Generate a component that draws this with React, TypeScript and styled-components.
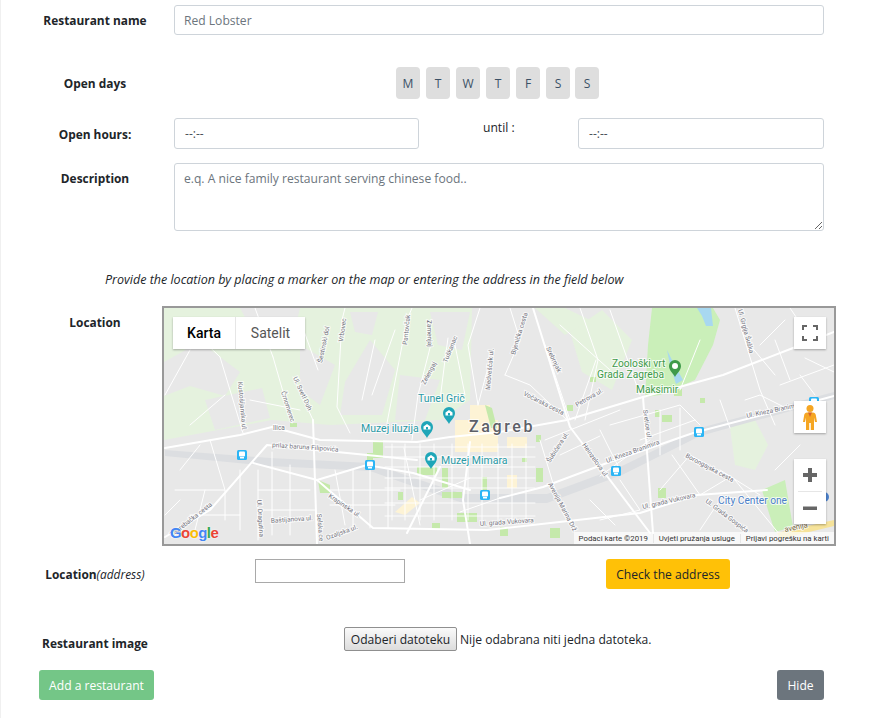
import React from 'react';
import styled, { createGlobalStyle } from 'styled-components';

const GlobalStyle = createGlobalStyle`
  html, body {
    margin: 0;
    padding: 0;
    background: #fff;
  }
  body {
    font-family: "Open Sans", "Noto Sans", "Liberation Sans", sans-serif;
    font-size: 12.1px;
    color: #212529;
  }
`;

const Form = styled.form`
  width: 882px;
  height: 718px;
  box-sizing: border-box;
  overflow: hidden;
  padding: 5px 58px 0 24px;
  border-left: 1px solid #f0f0f0;
  display: flex;
  flex-direction: column;
`;

const Row = styled.div<{ $top?: number; $align?: string }>`
  display: flex;
  align-items: ${p => p.$align || 'center'};
  margin-top: ${p => p.$top || 0}px;
`;

const Label = styled.label<{ $offset?: number }>`
  width: 140px;
  margin: ${p => p.$offset || 0}px 9px 0 0;
  flex: none;
  text-align: center;
  font-weight: 700;
  font-size: 11.9px;
  line-height: 20px;
  color: #212529;
`;

const AddressNote = styled.em`
  font-weight: 400;
`;

const TextInput = styled.input`
  flex: 1;
  min-width: 0;
  box-sizing: border-box;
  height: 30px;
  padding: 0 9px;
  border: 1px solid #ced4da;
  border-radius: 3px;
  background: #fff;
  font: 12.1px "Open Sans", sans-serif;
  color: #495057;
  &::placeholder { color: #6c757d; opacity: 1; }
`;

const DayList = styled.div`
  display: flex;
  margin-left: 222px;
`;

const Day = styled.span<{ $gap: number }>`
  width: 24px;
  height: 32px;
  margin-right: ${p => p.$gap}px;
  border-radius: 4px;
  background: #dedede;
  display: flex;
  align-items: center;
  justify-content: center;
  font-size: 12.1px;
  color: #3b5166;
`;

const TimeInput = styled.div<{ $w: number }>`
  box-sizing: border-box;
  width: ${p => p.$w}px;
  height: 31px;
  padding: 0 10px;
  border: 1px solid #ced4da;
  border-radius: 3px;
  display: flex;
  align-items: center;
  color: #495057;
  font-size: 12.1px;
`;

const Until = styled.span`
  width: 159px;
  padding-left: 64px;
  box-sizing: border-box;
  align-self: flex-start;
  line-height: 20px;
`;

const Description = styled.textarea`
  flex: 1;
  box-sizing: border-box;
  height: 68px;
  padding: 5px 9px;
  border: 1px solid #ced4da;
  border-radius: 3px;
  font: 12.1px/20px "Open Sans", sans-serif;
  color: #495057;
  &::placeholder { color: #6c757d; opacity: 1; }
`;

const Hint = styled.p`
  margin: 39px 0 0 80px;
  font-style: italic;
  font-size: 12.5px;
  line-height: 20px;
`;

const MapFrame = styled.div`
  position: relative;
  flex: none;
  box-sizing: border-box;
  width: 674px;
  height: 240px;
  margin-left: -12px;
  border: 2px solid #999;
  overflow: hidden;
  background: #e8e8e8;
  font-family: Roboto, "Liberation Sans", sans-serif;
  svg { display: block; }
`;

const MapTypes = styled.div`
  position: absolute;
  left: 9px;
  top: 9px;
  display: flex;
  height: 32px;
  background: #fff;
  box-shadow: 0 1px 2px rgba(0, 0, 0, 0.3);
  font-size: 14px;
`;

const MapType = styled.span<{ $active?: boolean; $w: number }>`
  width: ${p => p.$w}px;
  display: flex;
  align-items: center;
  justify-content: center;
  color: ${p => (p.$active ? '#000' : '#565656')};
  font-weight: ${p => (p.$active ? 500 : 400)};
  & + & { border-left: 1px solid #e6e6e6; }
`;

const MapControl = styled.div<{ $top: number; $h?: number }>`
  position: absolute;
  right: 8px;
  top: ${p => p.$top}px;
  width: 32px;
  height: ${p => p.$h || 32}px;
  background: #fff;
  box-shadow: 0 1px 2px rgba(0, 0, 0, 0.3);
  display: flex;
  flex-direction: column;
  align-items: center;
  justify-content: center;
`;

const ZoomButton = styled.div`
  flex: 1;
  display: flex;
  align-items: center;
  justify-content: center;
`;

const ZoomDivider = styled.div`
  width: 24px;
  height: 1px;
  flex: none;
  background: #e6e6e6;
`;

const Attribution = styled.div`
  position: absolute;
  right: 0;
  bottom: 0;
  height: 12px;
  display: flex;
  align-items: center;
  background: rgba(255, 255, 255, 0.7);
  font-size: 7.8px;
  color: #333;
  span { padding: 0 5px; white-space: nowrap; }
  span + span { border-left: 1px solid #e6e6e6; }
`;

const GoogleLogo = styled.div`
  position: absolute;
  left: 6px;
  bottom: 3px;
  font: 700 15px/17px "Liberation Sans", sans-serif;
  letter-spacing: -0.6px;
  text-shadow: 0 0 2px #fff;
`;

const LogoLetter = styled.span<{ $c: string }>`
  color: ${p => p.$c};
`;

const AddressInput = styled.input`
  box-sizing: border-box;
  width: 150px;
  height: 24px;
  margin-left: 81px;
  border: 1px solid #a9a9a9;
  background: #fff;
`;

const Button = styled.button<{ $bg: string; $fg: string; $w: number }>`
  box-sizing: border-box;
  width: ${p => p.$w}px;
  height: 30px;
  padding: 0;
  border: none;
  border-radius: 3px;
  background: ${p => p.$bg};
  color: ${p => p.$fg};
  font: 12.1px "Open Sans", sans-serif;
`;

const CheckButton = styled(Button)`
  margin-left: 201px;
`;

const FilePick = styled.div`
  display: flex;
  align-items: center;
  margin-left: 170px;
  font-size: 12.1px;
`;

const FileButton = styled.span`
  box-sizing: border-box;
  width: 113px;
  height: 24px;
  margin-right: 3px;
  display: flex;
  align-items: center;
  justify-content: center;
  border: 1px solid #8f8f8f;
  border-radius: 2px;
  background: linear-gradient(#fafafa, #dcdcdc);
`;

const Actions = styled.div`
  display: flex;
  justify-content: space-between;
  margin: 17px 0 0 14px;
`;

const MapLabel = styled.text<{ $c?: string; $s?: number; $w?: number; $ls?: number }>`
  font-family: Roboto, "Liberation Sans", sans-serif;
  font-size: ${p => p.$s || 6.5}px;
  font-weight: ${p => p.$w || 400};
  letter-spacing: ${p => p.$ls || 0}px;
  fill: ${p => p.$c || '#74747e'};
  paint-order: stroke;
  stroke: rgba(255, 255, 255, 0.75);
  stroke-width: 2px;
`;

const hillGreen = [
  'M164 308H472L470 400L440 420L330 425L272 420L164 440Z',
  'M570 332L602 310L632 340L612 390L582 372Z',
  'M535 308H565L590 320L565 335Z',
  'M730 427L755 420L768 445L755 470L735 465Z',
];
const hillGrey = [
  'M164 362L200 342L240 372L225 396L190 386L164 396Z',
  'M240 308H300L290 350L260 345Z',
  'M345 382L370 340L395 370L382 415L340 415Z',
  'M400 375L440 380L425 420L395 420Z',
  'M300 345L335 365L320 405L300 390Z',
  'M172 330L205 320L215 345L185 350Z',
  'M430 312L470 312L462 350L438 345Z',
  'M205 400L262 388L270 418L215 430Z',
  'M350 312L378 312L372 335L355 332Z',
];
const parks = [
  'M373 440H383V458H373Z', 'M367 453H373V460H367Z', 'M318 480L330 485V493H320Z', 'M290 423H297V427H290Z',
  'M417 467H437V475H417Z', 'M442 468H448V488H442Z', 'M442 492H462V498H442Z', 'M398 492H403V500H398Z',
  'M482 477H487V490H482Z', 'M485 405L492 408L497 428H491Z', 'M522 458H527V462H522Z', 'M536 468H543V482H536Z',
  'M550 528H560V538H550Z', 'M457 513H477V522H457Z', 'M590 377H596V382H590Z', 'M655 410H660V417H655Z',
  'M662 415H672V422H662Z', 'M658 488H666V498H658Z', 'M567 405H573V411H567Z', 'M536 435H541V442H536Z',
  'M432 523H440V530H432Z', 'M500 527H508V536H500Z', 'M700 398H705V403H700Z', 'M674 389H682V396H674Z',
];
const arterials = [
  'M165 448L240 435L272 427L320 440L417 442L450 437L500 432L567 420L643 397L723 375L793 348L834 332',
  'M165 537L210 510L267 445L347 453L417 460',
  'M253 463L317 480L367 465L413 473L470 490',
  'M317 480L373 528L487 530L640 513L697 495L767 490',
  'M500 498L543 487L607 463L693 433L793 407L834 396',
  'M533 308L570 427L650 533',
  'M643 397L653 533',
  'M440 467L407 533',
  'M313 420L317 544',
  'M470 442L463 500L470 544',
];
const streets = [
  'M220 357L243 433', 'M182 320L220 357', 'M273 357L292 423', 'M255 308L273 357', 'M293 377L313 420',
  'M342 320L337 407L350 433', 'M345 308L342 320', 'M407 320L387 423', 'M412 308L407 320',
  'M432 340L418 395L412 440', 'M448 338L445 360L440 400', 'M480 308L468 345L478 405',
  'M505 375L520 340L510 308', 'M505 375L530 385L567 420', 'M490 360L478 405',
  'M545 345L570 420', 'M580 308L598 360L585 420', 'M735 308L760 390L775 425',
  'M775 340L790 380', 'M790 308L815 345', 'M805 358L834 372', 'M780 385L834 365',
  'M240 470V530', 'M190 515H240', 'M175 490H225V520', 'M258 470V540', 'M272 452V535',
  'M258 490H310', 'M258 510H315', 'M290 465V535', 'M335 470L345 525', 'M330 490H400',
  'M330 505H395', 'M353 470V528', 'M370 470V528', 'M388 470V528', 'M404 448L420 525',
  'M420 500L470 478', 'M460 512L500 498', 'M540 440L558 500', 'M590 500L615 525',
  'M600 476L650 440', 'M620 470L600 430', 'M610 425L680 405L700 425', 'M640 440L695 420',
  'M660 410V455', 'M680 408V450', 'M660 490L690 455L735 480', 'M672 455L700 495', 'M720 470L760 495',
  'M735 480L780 535', 'M775 470L800 445', 'M725 480L700 495', 'M560 455L600 436', 'M545 440L620 410',
  'M596 360L575 420', 'M180 470L200 445', 'M210 440L225 490', 'M250 400L300 410', 'M190 350L165 395',
  'M610 310L640 395', 'M700 340L680 390', 'M720 400L730 428', 'M745 400L760 395L790 410',
  'M375 340L362 400', 'M300 320L318 370', 'M395 330L372 395', 'M225 395L190 425', 'M455 345L465 395',
  'M785 320L760 345', 'M800 375L815 395', 'M750 345L775 375', 'M560 325L610 370',
  'M600 520L640 510L620 480', 'M720 500L700 530', 'M180 500L165 515', 'M205 490L195 530',
];
const cityX = [392, 405, 420, 434, 452, 468, 482, 498, 512, 526];
const cityY = [447, 457, 467, 478, 488, 503, 516];

const smallLabels: [string, number, number, number][] = [
  ['Kustošijanska ul.', 238, 382, 85],
  ['Črnomerec', 281, 392, 72],
  ['Ul. Svetl Duh', 293, 378, 65],
  ['Šestinski dol', 322, 363, -78],
  ['Vrbovec', 343, 342, -82],
  ['Pantovčak', 407, 345, -84],
  ['Zamenjaj', 427, 320, 88],
  ['Tuškanac', 447, 363, -68],
  ['Zelengaj', 425, 385, -62],
  ['Medveščak ul.', 490, 390, -85],
  ['Ilica', 273, 430, 0],
  ['prilaz baruna Filipovića', 272, 447, 4],
  ['Krapinska ul.', 328, 497, 34],
  ['Baštijanova ul.', 271, 523, -4],
  ['Selska ce', 317, 514, 85],
  ['Ozaljska ul.', 327, 540, -20],
  ['Zagrebačka cesta', 172, 537, -38],
  ['Ul. Dragutina', 257, 500, 86],
  ['Bijenička cesta', 515, 355, -73],
  ['Srebrnjak', 546, 348, 65],
  ['Vočarska cesta', 523, 395, 27],
  ['Petrova ul.', 577, 407, -30],
  ['Šubićeva ul.', 550, 463, -57],
  ['Heinzelova ul.', 582, 445, 55],
  ['Avenija Marina Drž', 548, 484, 62],
  ['Ul. Kneza Branimira', 607, 463, -20],
  ['Ul. Kneza Branimira', 747, 418, -12],
  ['Svetice ul.', 643, 410, 82],
  ['Borongajska cesta', 685, 457, 28],
  ['Ul. grada Vukovara', 643, 509, -13],
  ['Ul. Grada Gospića', 705, 502, 37],
  ['Ul. grada Vukovara', 480, 526, -4],
  ['Ul. Grgija Šuška', 738, 310, 75],
];

const pinBody = 'M0 10C-2 6-6 3.500-6-1A6 6 0 0 1 6-1C6 3.500 2 6 0 10Z';

const TealPin: React.FC<{ x: number; y: number }> = ({ x, y }) => (
  <g transform={`translate(${x} ${y})`}>
    <path d={pinBody} fill="#1fa6b8" />
    <path d="M-3.500-1.500L0-4L3.500-1.500V1.500H-3.500Z" fill="#fff" />
    <path d="M-1-1H1V1.500H-1Z" fill="#1fa6b8" />
  </g>
);

const TransitStop: React.FC<{ x: number; y: number }> = ({ x, y }) => (
  <g transform={`translate(${x} ${y})`}>
    <rect x="-5" y="-5" width="10" height="10" rx="1.500" fill="#2bb5f5" />
    <rect x="-3" y="-3.500" width="6" height="5" rx="1" fill="#fff" />
    <rect x="-2" y="2" width="4" height="1.500" fill="#fff" />
  </g>
);

const MapDrawing: React.FC = () => (
  <svg width="670" height="236" viewBox="164 308 670 236">
    <rect x="164" y="308" width="670" height="236" fill="#e8e8e8" />
    {hillGreen.map(d => <path key={d} d={d} fill="#e5f2de" />)}
    {hillGrey.map(d => <path key={d} d={d} fill="#e8e8e8" />)}
    <path d="M165 450L270 458L370 463L420 480L463 494H547L620 467L700 428L834 392V399L700 436L622 475L547 503H463L418 488L370 471L270 466L165 456Z" fill="#dcdee1" />
    <path d="M652 308H713L720 320L713 345L695 380L660 395L645 397L648 345Z" fill="#caefb9" />
    <path d="M697 308H711L713 326L706 326L702 316Z" fill="#a8d8f0" />
    <path d="M667 350L672 360L683 380L676 384L670 365Z" fill="#a8d8f0" />
    <path d="M762 490L785 480L793 527L775 532L768 510Z" fill="#caefb9" />
    <path d="M470 405H490V420H498V452H455V420H470Z" fill="#fdf3d5" />
    <path d="M507 437H527V448H507Z" fill="#fdf3d5" />
    <path d="M507 475H517V488H507Z" fill="#fdf3d5" />
    <path d="M395 512L412 497L420 503L405 515Z" fill="#fdf3d5" />
    {parks.map(d => <path key={d} d={d} fill="#c5e9ab" />)}
    <g fill="none" stroke="#fff" strokeLinejoin="round" strokeLinecap="round">
      {cityX.map(x => <path key={x} d={`M${x} 444V520`} strokeWidth="0.9" />)}
      {cityY.map(y => <path key={y} d={`M385 ${y}H535`} strokeWidth="0.9" />)}
      {streets.map(d => <path key={d} d={d} strokeWidth="1" />)}
      {arterials.map(d => <path key={d} d={d} strokeWidth="2" />)}
    </g>
    <path d="M777 533L834 520V526L780 539Z" fill="#f6e39a" />
    {smallLabels.map(([t, x, y, r]) => (
      <MapLabel key={t + x} x={x} y={y} transform={`rotate(${r} ${x} ${y})`}>{t}</MapLabel>
    ))}
    <MapLabel x="418" y="402" $c="#2a9aa6" $s={10.5}>Tunel Grič</MapLabel>
    <MapLabel x="361" y="432" $c="#2a9aa6" $s={10.5}>Muzej iluzija</MapLabel>
    <MapLabel x="441" y="464" $c="#2a9aa6" $s={10.5}>Muzej Mimara</MapLabel>
    <MapLabel x="469" y="432" $c="#5c6068" $s={16} $w={500} $ls={2.6}>Zagreb</MapLabel>
    <MapLabel x="612" y="367" $c="#3f9a4a" $s={10.2}>Zoološki vrt</MapLabel>
    <MapLabel x="597" y="378" $c="#3f9a4a" $s={10.2}>Grada Zagreba</MapLabel>
    <MapLabel x="636" y="393" $c="#3f9a4a" $s={10.2}>Maksimir</MapLabel>
    <MapLabel x="718" y="504" $c="#4a7fc8" $s={10.2}>City Center one</MapLabel>
    <MapLabel x="785" y="532" $c="#7a6a40" $s={7.5} transform="rotate(-12 785 532)">avenija</MapLabel>
    <circle cx="824" cy="497" r="5" fill="#4a7fc8" />
    <TealPin x={449} y={414} />
    <TealPin x={427} y={428} />
    <TealPin x={431} y={459} />
    <g transform="translate(675 367)">
      <path d={pinBody} fill="#3f9a4a" />
      <circle cy="-1" r="3" fill="#fff" />
    </g>
    <TransitStop x={242} y={455} />
    <TransitStop x={370} y={465} />
    <TransitStop x={485} y={495} />
    <TransitStop x={699} y={432} />
    <TransitStop x={616} y={471} />
    <TransitStop x={814} y={402} />
  </svg>
);

const App: React.FC = () => (
  <>
    <GlobalStyle />
    <Form>
      <Row>
        <Label>Restaurant name</Label>
        <TextInput placeholder="Red Lobster" />
      </Row>

      <Row $top={32}>
        <Label>Open days</Label>
        <DayList>
          {['M', 'T', 'W', 'T', 'F', 'S', 'S'].map((d, i) => (
            <Day key={i} $gap={i === 5 ? 5 : 6}>{d}</Day>
          ))}
        </DayList>
      </Row>

      <Row $top={19}>
        <Label>Open hours:</Label>
        <TimeInput $w={245}>--:--</TimeInput>
        <Until>until :</Until>
        <TimeInput $w={246}>--:--</TimeInput>
      </Row>

      <Row $top={14} $align="flex-start">
        <Label $offset={5}>Description</Label>
        <Description placeholder="e.q. A nice family restaurant serving chinese food.." />
      </Row>

      <Hint>Provide the location by placing a marker on the map or entering the address in the field below</Hint>

      <Row $top={16} $align="flex-start">
        <Label $offset={6}>Location</Label>
        <MapFrame>
          <MapDrawing />
          <MapTypes>
            <MapType $active $w={62}>Karta</MapType>
            <MapType $w={69}>Satelit</MapType>
          </MapTypes>
          <MapControl $top={9}>
            <svg width="18" height="18" viewBox="0 0 18 18" fill="none" stroke="#666" strokeWidth="2">
              <path d="M2 6V2h4M12 2h4v4M16 12v4h-4M6 16H2v-4" />
            </svg>
          </MapControl>
          <MapControl $top={93}>
            <svg width="14" height="25" viewBox="0 0 14 25">
              <circle cx="7" cy="3.500" r="3.500" fill="#f5a623" />
              <path d="M4 7.500H10C11.500 7.500 12.500 8.500 12.800 10L14 17H12L11 12.500V25H7.800V18H6.200V25H3V12.500L2 17H0L1.200 10C1.500 8.500 2.500 7.500 4 7.500Z" fill="#f5a623" />
              <path d="M5 7.500L7 12L9 7.500Z" fill="#d9622b" />
            </svg>
          </MapControl>
          <MapControl $top={151} $h={65}>
            <ZoomButton>
              <svg width="16" height="16" viewBox="0 0 16 16" fill="#666">
                <path d="M6 1H10V6H15V10H10V15H6V10H1V6H6Z" />
              </svg>
            </ZoomButton>
            <ZoomDivider />
            <ZoomButton>
              <svg width="16" height="16" viewBox="0 0 16 16" fill="#666">
                <path d="M1 6.500H15V10H1Z" />
              </svg>
            </ZoomButton>
          </MapControl>
          <GoogleLogo>
            <LogoLetter $c="#4285f4">G</LogoLetter>
            <LogoLetter $c="#ea4335">o</LogoLetter>
            <LogoLetter $c="#fbbc05">o</LogoLetter>
            <LogoLetter $c="#4285f4">g</LogoLetter>
            <LogoLetter $c="#34a853">l</LogoLetter>
            <LogoLetter $c="#ea4335">e</LogoLetter>
          </GoogleLogo>
          <Attribution>
            <span>Podaci karte ©2019</span>
            <span>Uvjeti pružanja usluge</span>
            <span>Prijavi pogrešku na karti</span>
          </Attribution>
        </MapFrame>
      </Row>

      <Row $top={13} $align="flex-start">
        <Label as="div" $offset={5}>
          Location<AddressNote>(address)</AddressNote>
        </Label>
        <AddressInput />
        <CheckButton type="button" $bg="#ffc107" $fg="#212529" $w={124}>Check the address</CheckButton>
      </Row>

      <Row $top={38} $align="flex-start">
        <Label $offset={6}>Restaurant image</Label>
        <FilePick>
          <FileButton>Odaberi datoteku</FileButton>
          Nije odabrana niti jedna datoteka.
        </FilePick>
      </Row>

      <Actions>
        <Button type="button" $bg="#74c687" $fg="#fff" $w={115}>Add a restaurant</Button>
        <Button type="button" $bg="#6c757d" $fg="#fff" $w={47}>Hide</Button>
      </Actions>
    </Form>
  </>
);

export default App;
